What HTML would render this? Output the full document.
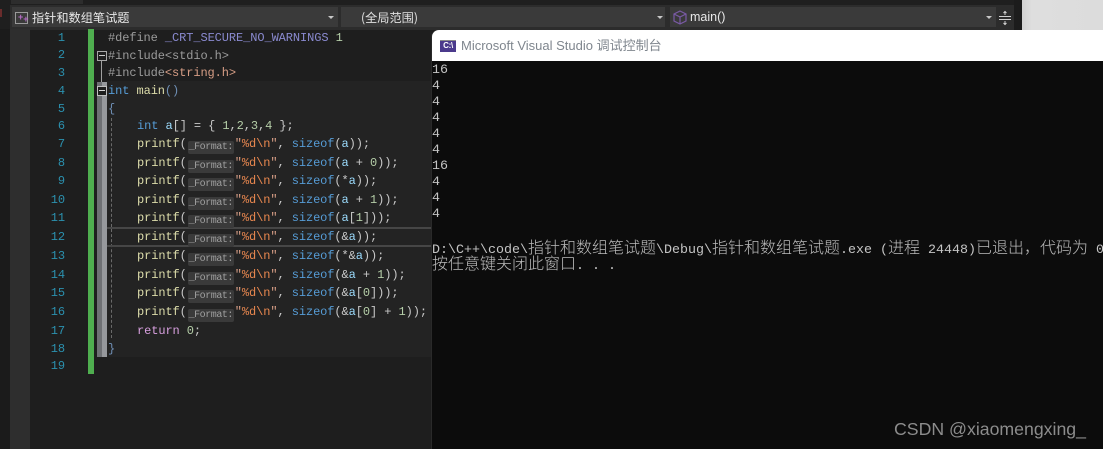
<!DOCTYPE html>
<html><head><meta charset="utf-8">
<style>
html,body{margin:0;padding:0;background:#1e1e1e;}
#r{position:relative;width:1103px;height:449px;overflow:hidden;background:#1e1e1e;font-family:"Liberation Mono","Noto Sans CJK SC",monospace;}
.a{position:absolute;}
.l{position:absolute;white-space:pre;font:12px/16px "Liberation Mono",monospace;letter-spacing:-.09px;color:#c8c8c8;height:16px;}
.n{position:absolute;right:1038px;width:40px;text-align:right;font:12px/16px "Liberation Mono",monospace;letter-spacing:-.09px;color:#2b91af;}
.c{position:absolute;white-space:pre;font:13.33px/16px "Liberation Mono","Noto Sans CJK SC",monospace;color:#c4c4c4;left:432px;height:16px;}
.c i{font-style:normal;font-size:16px;line-height:16px;display:inline-block;width:16px;text-align:center;font-weight:300;font-family:"Noto Sans CJK SC",sans-serif;color:#bcbcbc;letter-spacing:0;}
.dd{position:absolute;top:7px;height:20px;background:#3a3a3a;}
.arr{position:absolute;top:9px;width:0;height:0;border-left:3px solid transparent;border-right:3px solid transparent;border-top:3px solid #c8c8c8;}
.f{color:#dcdcaa}.k{color:#569cd6}.v{color:#9cdcfe}.s{color:#d69d85}.g{color:#b5cea8}.p{color:#d8a0df}.q{color:#9b9b9b}.w{color:#6f8fb5}.t{color:#d69d85}.o{color:#e8874f}
.chip{display:inline-block;width:46px;height:13px;margin:0 1px 0 1px;background:#3a3a3a;border-radius:2px;color:#a0a0a0;font:10px/14px "Liberation Mono",monospace;letter-spacing:-.45px;text-align:center;vertical-align:-2px;}
</style></head>
<body><div id="r">
<div class="a" style="left:0;top:0;width:1022px;height:30px;background:#1f1f1f"></div>
<div class="a" style="left:11px;top:0;width:72px;height:4px;background:#2d2d2d"></div>
<div class="a" style="left:0;top:9px;width:2px;height:8px;background:#6a2c2c"></div>
<div class="a" style="left:10px;top:5px;width:1004px;height:25px;background:#2c2c2c"></div>

<div class="dd" style="left:12px;width:326px"></div>
<div class="a" style="left:15px;top:12px;width:11px;height:10px;border:1px solid #9a9a9a"></div>
<div class="a" style="left:18px;top:12px;color:#b56cc6;font:bold 9px/11px 'Liberation Sans',sans-serif">+<span style="position:relative;top:2px">+</span></div>
<div class="a" style="left:32px;top:9px;font:12.2px/17px 'Noto Sans CJK SC',sans-serif;color:#e8e8e8;white-space:pre">指针和数组笔试题</div>
<div class="arr" style="left:328px;top:16px"></div>

<div class="dd" style="left:341px;width:324px"></div>
<div class="a" style="left:361px;top:9px;font:12.2px/17px 'Noto Sans CJK SC',sans-serif;color:#e0e0e0;white-space:pre">(全局范围)</div>
<div class="arr" style="left:657px;top:16px"></div>

<div class="dd" style="left:670px;width:326px"></div>
<svg class="a" style="left:673px;top:10px" width="14" height="15" viewBox="0 0 14 15" fill="none" stroke="#7a5aa6" stroke-width="1.2"><path d="M7 1L13 4V11L7 14L1 11V4Z"/><path d="M1 4L7 7L13 4M7 7V14"/></svg>
<div class="a" style="left:690px;top:9px;font:12.5px/17px 'Liberation Sans',sans-serif;color:#e8e8e8;white-space:pre">main()</div>
<div class="arr" style="left:986px;top:16px"></div>
<svg class="a" style="left:998px;top:10px" width="14" height="16" viewBox="0 0 14 16" stroke="#d0d0d0" fill="none" stroke-width="1"><path d="M1 6.5H13M1 9.5H13M7 1V5M7 11V15"/><path d="M5.5 3L7 1.5L8.5 3M5.5 13L7 14.5L8.5 13"/></svg>

<div class="a" style="left:1014px;top:0;width:8px;height:30px;background:#1c1c1c"></div>
<div class="a" style="left:1022px;top:0;width:81px;height:30px;background:linear-gradient(90deg,#d2d2d2,#dedede 12%,#dcdcdc)"></div>

<div class="a" style="left:0;top:29px;width:10px;height:420px;background:#1b1b1b"></div>
<div class="a" style="left:10px;top:29px;width:20px;height:420px;background:#2e2e2e"></div>
<div class="a" style="left:107px;top:81px;width:325px;height:276px;background:#232323"></div>
<div class="a" style="left:88px;top:29px;width:6px;height:345px;background:#4fae4f"></div>

<div class="a" style="left:97px;top:82px;width:5px;height:275px;background:#6e7074"></div>
<div class="a" style="left:102px;top:82px;width:5px;height:275px;background:#96989c"></div>
<div class="a" style="left:101px;top:60px;width:1px;height:22px;background:#a0a0a0"></div>
<div class="a" style="left:97px;top:51px;width:8px;height:8px;border:1px solid #a8a8a8;background:#1e1e1e"></div>
<div class="a" style="left:99px;top:55px;width:6px;height:1px;background:#c8c8c8"></div>
<div class="a" style="left:97px;top:86px;width:8px;height:8px;border:1px solid #c0c0c0;background:#1e1e1e"></div>
<div class="a" style="left:99px;top:90px;width:6px;height:1px;background:#d8d8d8"></div>
<div class="a" style="left:111px;top:118px;width:0;height:220px;border-left:1px dashed #6a6a6a"></div>

<div class="a" style="left:107px;top:227px;width:325px;height:2px;background:#464646"></div>
<div class="a" style="left:107px;top:245px;width:325px;height:2px;background:#464646"></div>

<div class="n" style="top:30px">1</div>
<div class="n" style="top:47px">2</div>
<div class="n" style="top:65px">3</div>
<div class="n" style="top:83px">4</div>
<div class="n" style="top:101px">5</div>
<div class="n" style="top:118px">6</div>
<div class="n" style="top:136px">7</div>
<div class="n" style="top:155px">8</div>
<div class="n" style="top:173px">9</div>
<div class="n" style="top:192px">10</div>
<div class="n" style="top:210px">11</div>
<div class="n" style="top:229px">12</div>
<div class="n" style="top:248px">13</div>
<div class="n" style="top:267px">14</div>
<div class="n" style="top:285px">15</div>
<div class="n" style="top:304px">16</div>
<div class="n" style="top:323px">17</div>
<div class="n" style="top:341px">18</div>
<div class="n" style="top:358px">19</div>

<div class="l" style="left:108px;top:30px"><span class="q">#define</span> <span style="color:#8a8ad0">_CRT_SECURE_NO_WARNINGS</span> <span class="g">1</span></div>
<div class="l" style="left:108px;top:48px"><span class="q">#include&lt;stdio.h&gt;</span></div>
<div class="l" style="left:108px;top:65px"><span class="q">#include</span><span class="t">&lt;string.h&gt;</span></div>
<div class="l" style="left:108px;top:83px"><span class="k">int</span> <span class="f">main</span><span class="w">()</span></div>
<div class="l" style="left:108px;top:101px"><span class="w">{</span></div>
<div class="l" style="left:137px;top:118px"><span class="k">int</span> <span class="v">a</span>[] = { <span class="g">1</span>,<span class="g">2</span>,<span class="g">3</span>,<span class="g">4</span> };</div>

<div class="l" style="left:137px;top:136px"><span class="f">printf</span>(<span class="chip">_Format:</span><span class="s">"</span><span class="o">%d\n</span><span class="s">"</span>, <span class="k">sizeof</span>(<span class="v">a</span>));</div>
<div class="l" style="left:137px;top:155px"><span class="f">printf</span>(<span class="chip">_Format:</span><span class="s">"</span><span class="o">%d\n</span><span class="s">"</span>, <span class="k">sizeof</span>(<span class="v">a</span> + <span class="g">0</span>));</div>
<div class="l" style="left:137px;top:173px"><span class="f">printf</span>(<span class="chip">_Format:</span><span class="s">"</span><span class="o">%d\n</span><span class="s">"</span>, <span class="k">sizeof</span>(*<span class="v">a</span>));</div>
<div class="l" style="left:137px;top:192px"><span class="f">printf</span>(<span class="chip">_Format:</span><span class="s">"</span><span class="o">%d\n</span><span class="s">"</span>, <span class="k">sizeof</span>(<span class="v">a</span> + <span class="g">1</span>));</div>
<div class="l" style="left:137px;top:210px"><span class="f">printf</span>(<span class="chip">_Format:</span><span class="s">"</span><span class="o">%d\n</span><span class="s">"</span>, <span class="k">sizeof</span>(<span class="v">a</span>[<span class="g">1</span>]));</div>
<div class="l" style="left:137px;top:229px"><span class="f">printf</span>(<span class="chip">_Format:</span><span class="s">"</span><span class="o">%d\n</span><span class="s">"</span>, <span class="k">sizeof</span>(&amp;<span class="v">a</span>));</div>
<div class="l" style="left:137px;top:248px"><span class="f">printf</span>(<span class="chip">_Format:</span><span class="s">"</span><span class="o">%d\n</span><span class="s">"</span>, <span class="k">sizeof</span>(*&amp;<span class="v">a</span>));</div>
<div class="l" style="left:137px;top:267px"><span class="f">printf</span>(<span class="chip">_Format:</span><span class="s">"</span><span class="o">%d\n</span><span class="s">"</span>, <span class="k">sizeof</span>(&amp;<span class="v">a</span> + <span class="g">1</span>));</div>
<div class="l" style="left:137px;top:285px"><span class="f">printf</span>(<span class="chip">_Format:</span><span class="s">"</span><span class="o">%d\n</span><span class="s">"</span>, <span class="k">sizeof</span>(&amp;<span class="v">a</span>[<span class="g">0</span>]));</div>
<div class="l" style="left:137px;top:304px"><span class="f">printf</span>(<span class="chip">_Format:</span><span class="s">"</span><span class="o">%d\n</span><span class="s">"</span>, <span class="k">sizeof</span>(&amp;<span class="v">a</span>[<span class="g">0</span>] + <span class="g">1</span>));</div>
<div class="l" style="left:137px;top:323px"><span class="p">return</span> <span class="g">0</span>;</div>
<div class="l" style="left:108px;top:341px"><span class="w">}</span></div>

<div class="a" style="left:431px;top:30px;width:672px;height:419px;background:#2a2a2a;border-top-left-radius:7px"></div>
<div class="a" style="left:432px;top:30px;width:671px;height:31px;background:#fff;border-top-left-radius:7px"></div>
<div class="a" style="left:432px;top:61px;width:671px;height:388px;background:#0c0c0c"></div>
<div class="a" style="left:440px;top:40px;width:16px;height:11px;background:#4b3a8c;border-top:1px solid #8a8a8a;color:#fff;font:bold 8px/10px 'Liberation Sans',sans-serif;text-align:center;letter-spacing:-.3px">C:\</div>
<div class="a" style="left:461px;top:37px;font:13px/17px 'Liberation Sans','Noto Sans CJK SC',sans-serif;color:#7f868e;white-space:pre">Microsoft Visual Studio 调试控制台</div>

<div class="c" style="top:63px">16</div>
<div class="c" style="top:79px">4</div>
<div class="c" style="top:95px">4</div>
<div class="c" style="top:111px">4</div>
<div class="c" style="top:127px">4</div>
<div class="c" style="top:143px">4</div>
<div class="c" style="top:159px">16</div>
<div class="c" style="top:175px">4</div>
<div class="c" style="top:191px">4</div>
<div class="c" style="top:207px">4</div>
<div class="c" style="top:238px">D:\C++\code\<i>指</i><i>针</i><i>和</i><i>数</i><i>组</i><i>笔</i><i>试</i><i>题</i>\Debug\<i>指</i><i>针</i><i>和</i><i>数</i><i>组</i><i>笔</i><i>试</i><i>题</i>.exe (<i>进</i><i>程</i> 24448)<i>已</i><i>退</i><i>出</i><i>，</i><i>代</i><i>码</i><i>为</i> 0</div>
<div class="c" style="top:254px"><i>按</i><i>任</i><i>意</i><i>键</i><i>关</i><i>闭</i><i>此</i><i>窗</i><i>口</i>. . .</div>

<div class="a" style="left:894px;top:419px;font:17.7px/21px 'Liberation Sans',sans-serif;color:#8c8c8c;white-space:pre">CSDN @xiaomengxing_</div>
</div></body></html>
